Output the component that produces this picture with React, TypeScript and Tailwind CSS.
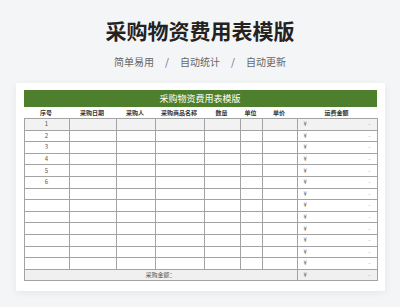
const cols = [45, 47, 39, 49, 36, 22, 35, 80];
const heads = ['序号', '采购日期', '采购人', '采购商品名称', '数量', '单位', '单价', '运费金额'];
const rows = Array.from({ length: 13 }, (_, i) => (i < 6 ? String(i + 1) : ''));

const cjk = "font-['Noto_Sans_CJK_SC','Noto_Sans',sans-serif]";

export default function App() {
  return (
    <div className={`w-[400px] h-[307px] bg-[#f4f5f7] flex flex-col items-center ${cjk}`}>
      <h1 className="mt-[16px] text-[21px] leading-[28px] font-bold text-[#222]">采购物资费用表模版</h1>
      <div className="mt-[11px] flex items-center gap-[11px] text-[10px] leading-[14px] text-[#666]">
        <span>简单易用</span>
        <span>/</span>
        <span>自动统计</span>
        <span>/</span>
        <span>自动更新</span>
      </div>
      <div className="mt-[14px] w-[369px] bg-white shadow-[0_2px_8px_rgba(0,0,0,0.06)] px-[8px] pt-[7px] pb-[10px]">
        <div className="h-[17px] bg-[#4e7f2d] flex items-center justify-center text-white text-[9px]">
          采购物资费用表模版
        </div>
        <div className="flex h-[11px] items-center text-[6px] font-bold text-[#333]">
          {heads.map((h, i) => (
            <div key={h} style={{ width: cols[i] }} className="text-center">
              {h}
            </div>
          ))}
        </div>
        <table className="table-fixed border-collapse w-[353px] border border-[#8c8c8c] text-[6px] leading-[8px] text-[#555]">
          <colgroup>
            {cols.map((w, i) => (
              <col key={i} style={{ width: w }} />
            ))}
          </colgroup>
          <tbody>
            {rows.map((n, i) => (
              <tr key={i} className={`h-[11.6px] ${i === 0 ? 'bg-[#f2f2f2]' : ''}`}>
                <td className="border border-[#a3a3a3] text-center p-0 text-[#555]">{n}</td>
                <td className="border border-[#a3a3a3] p-0" />
                <td className="border border-[#a3a3a3] p-0" />
                <td className="border border-[#a3a3a3] p-0" />
                <td className="border border-[#a3a3a3] p-0" />
                <td className="border border-[#a3a3a3] p-0" />
                <td className="border border-[#a3a3a3] p-0" />
                <td className="border border-[#a3a3a3] p-0 px-[6px]">
                  <div className="flex justify-between items-center">
                    <span>¥</span>
                    <span className="text-[#999]">-</span>
                  </div>
                </td>
              </tr>
            ))}
            <tr className="h-[11.6px] bg-[#f0f0f0]">
              <td colSpan={7} className="border border-[#a3a3a3] text-center p-0">
                采购金额：
              </td>
              <td className="border border-[#a3a3a3] p-0 px-[6px]">
                <div className="flex justify-between items-center">
                  <span>¥</span>
                  <span className="text-[#999]">-</span>
                </div>
              </td>
            </tr>
          </tbody>
        </table>
      </div>
    </div>
  );
}
